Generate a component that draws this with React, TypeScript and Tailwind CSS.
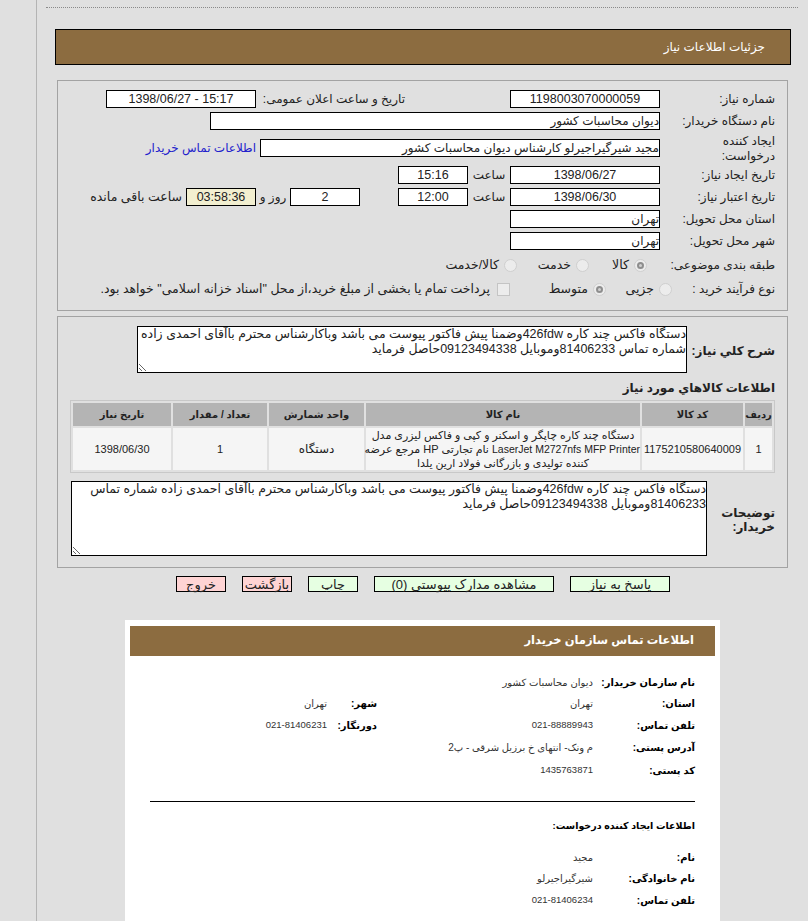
const FONT = "font-['Liberation_Sans','DejaVu_Sans',sans-serif]";

// فیلد عددی وسط چین است و فیلد متنی راست چین
function Field({ w, children, text, bg = "bg-white" }: { w: string; children?: React.ReactNode; text?: boolean; bg?: string }) {
  return (
    <div
      dir={text ? "rtl" : "ltr"}
      className={`${w} ${bg} ${text ? "text-right text-[12px]" : "text-center text-[12.5px]"} h-[18px] shrink-0 overflow-hidden whitespace-nowrap border border-black leading-[17px] text-[#222]`}
    >
      {children}
    </div>
  );
}

function Label({ w, children }: { w: string; children: React.ReactNode }) {
  return <div className={`${w} h-[18px] shrink-0 whitespace-nowrap text-[12px] leading-[19px] text-[#222]`}>{children}</div>;
}

function Radio({ checked }: { checked?: boolean }) {
  return (
    <span className="flex size-[13px] shrink-0 items-center justify-center rounded-full border border-[#cfcfcf] bg-[#ececec]">
      {checked && <span className="size-[7px] rounded-full border-2 border-[#8e8e8e] bg-[#d0d0d0]" />}
    </span>
  );
}

function RadioItem({ w, checked, text }: { w: string; checked?: boolean; text: string }) {
  return (
    <div className={`${w} flex shrink-0 items-center gap-[5px] text-[12.5px] text-[#222]`}>
      <Radio checked={checked} />
      <span>{text}</span>
    </div>
  );
}

function Btn({ w, pink, children }: { w: string; pink?: boolean; children: React.ReactNode }) {
  return (
    <div className={`${w} ${pink ? "bg-[#ffd4d4]" : "bg-[#e6ffe2]"} h-4 shrink-0 border border-black text-center text-[13px] leading-[15px] text-[#222]`}>
      {children}
    </div>
  );
}

function ContactValue({ children }: { children: string }) {
  const isNumber = /^[\d-]+$/.test(children);
  return <div className={`${isNumber ? "text-[9.5px]" : "text-[10px]"} whitespace-nowrap text-[#333]`}>{children}</div>;
}

function ContactRow({ label, value, label2, value2, top }: { label: string; value: string; label2?: string; value2?: string; top: string }) {
  return (
    <div className={`${top} flex h-[16px] items-center text-[10px]`}>
      <div className="w-[102px] shrink-0 whitespace-nowrap font-bold text-black">{label}</div>
      <div className="w-[216px] shrink-0">
        <ContactValue>{value}</ContactValue>
      </div>
      {label2 && <div className="w-[50px] shrink-0 font-bold text-black">{label2}</div>}
      {value2 && <ContactValue>{value2}</ContactValue>}
    </div>
  );
}

const DESC = "دستگاه فاکس چند کاره 426fdwوضمنا پیش فاکتور پیوست می باشد وباکارشناس محترم باآقای احمدی زاده شماره تماس 81406233وموبایل 09123494338حاصل فرماید";

export default function App() {
  return (
    <div className={`${FONT} flex h-[921px] w-[808px] overflow-hidden bg-[#e0e0e0]`}>
      {/* نوار کناری */}
      <div className="h-full w-[37px] shrink-0 border-r border-[#b4b4b4]" />

      <div className="w-[771px] shrink-0">
        <div className="ml-[9px] mt-[7px] w-[752px] border-t border-dotted border-[#8a8a8a]" />

        {/* هدر */}
        <div dir="rtl" className="ml-[18px] mt-[21px] flex h-[36px] w-[736px] items-center border border-black bg-[#8c6c40] pr-[25px] text-[12px] text-white">
          جزئیات اطلاعات نیاز
        </div>

        {/* پنل اطلاعات نیاز */}
        <div dir="rtl" className="ml-5 mt-[15px] h-[231px] w-[731px] border border-[#a3a3a3] pr-3 pt-[9px]">
          <div className="flex">
            <Label w="w-[115px]">شماره نیاز:</Label>
            <Field w="w-[150px]">1198003070000059</Field>
            <Label w="w-[254px] pr-[105px]">تاریخ و ساعت اعلان عمومی:</Label>
            <Field w="w-[150px]">1398/06/27 - 15:17</Field>
          </div>
          <div className="mt-1 flex">
            <Label w="w-[115px]">نام دستگاه خریدار:</Label>
            <Field w="w-[450px]" text>دیوان محاسبات کشور</Field>
          </div>
          <div className="mt-[9px] flex h-[18px]">
            <div className="-mt-[5px] w-[115px] shrink-0 text-[12px] leading-[15px] text-[#222]">
              ایجاد کننده
              <br />
              درخواست:
            </div>
            <Field w="w-[400px]" text>مجید شیرگیراجیرلو کارشناس دیوان محاسبات کشور</Field>
            <div className="mr-1 whitespace-nowrap text-[12px] leading-[18px] text-[#2222cc]">اطلاعات تماس خریدار</div>
          </div>
          <div className="mt-[9px] flex">
            <Label w="w-[115px]">تاریخ ایجاد نیاز:</Label>
            <Field w="w-[150px]">1398/06/27</Field>
            <Label w="w-[42px] text-center">ساعت</Label>
            <Field w="w-[70px]">15:16</Field>
          </div>
          <div className="mt-1 flex">
            <Label w="w-[115px]">تاریخ اعتبار نیاز:</Label>
            <Field w="w-[150px]">1398/06/30</Field>
            <Label w="w-[42px] text-center">ساعت</Label>
            <Field w="w-[70px]">12:00</Field>
            <div className="w-[38px] shrink-0" />
            <Field w="w-[70px]">2</Field>
            <Label w="w-[34px] text-center">روز و</Label>
            <Field w="w-[70px]" bg="bg-[#f2efd0]">03:58:36</Field>
            <Label w="w-[96px] pr-1 text-[12.5px]!">ساعت باقی مانده</Label>
          </div>
          <div className="mt-1 flex">
            <Label w="w-[115px]">استان محل تحویل:</Label>
            <Field w="w-[150px]" text>تهران</Field>
          </div>
          <div className="mt-1 flex">
            <Label w="w-[115px]">شهر محل تحویل:</Label>
            <Field w="w-[150px]" text>تهران</Field>
          </div>
          <div className="mt-[6px] flex h-[18px] items-center">
            <Label w="w-[128px]">طبقه بندی موضوعی:</Label>
            <RadioItem w="w-[58px]" checked text="کالا" />
            <RadioItem w="w-[72px]" text="خدمت" />
            <RadioItem w="w-[90px]" text="کالا/خدمت" />
          </div>
          <div className="mt-[6px] flex h-[18px] items-center">
            <Label w="w-[103px]">نوع فرآیند خرید :</Label>
            <RadioItem w="w-[66px]" text="جزیی" />
            <RadioItem w="w-[96px]" checked text="متوسط" />
            <div className="flex items-center gap-[7px] whitespace-nowrap text-[12.5px] text-[#222]">
              <span className="size-[13px] shrink-0 border border-[#c4c4c4] bg-[#ececec]" />
              <span>پرداخت تمام یا بخشی از مبلغ خرید،از محل "اسناد خزانه اسلامی" خواهد بود.</span>
            </div>
          </div>
        </div>

        {/* پنل شرح نیاز */}
        <div dir="rtl" className="ml-5 mt-[5px] h-[252px] w-[731px] border border-[#a3a3a3] pr-3 pt-[9px]">
          <div className="flex items-center">
            <div className="w-[88px] shrink-0 whitespace-nowrap pt-[3px] text-[12px] font-bold text-[#222]">شرح کلي نياز:</div>
            <textarea
              readOnly
              dir="rtl"
              value={DESC}
              className="h-[47px] w-[550px] border border-black bg-white px-0 py-0 text-[12.5px] leading-[15px] text-[#222] outline-none"
            />
          </div>
          <div className="mt-[6px] text-[12px] font-bold leading-[18px] text-[#222]">اطلاعات كالاهاي مورد نياز</div>

          <table className="mt-[3px] w-[703px] table-fixed border-separate border-spacing-[2px] border border-[#c8c8c8] text-center text-[11px] text-[#222]">
            <colgroup>
              <col className="w-[27px]" />
              <col className="w-[101px]" />
              <col className="w-[274px]" />
              <col className="w-[95px]" />
              <col className="w-[94px]" />
              <col className="w-[98px]" />
            </colgroup>
            <thead>
              <tr className="h-[23px] bg-[#b4b4b4] font-bold">
                <th className="p-0 text-[10px]">ردیف</th>
                <th className="p-0 text-[10px]">کد کالا</th>
                <th className="p-0 text-[10px]">نام کالا</th>
                <th className="p-0 text-[10px]">واحد شمارش</th>
                <th className="p-0 text-[10px]">تعداد / مقدار</th>
                <th className="p-0 text-[10px]">تاریخ نیاز</th>
              </tr>
            </thead>
            <tbody>
              <tr className="h-[42px] bg-[#f5f5f5]">
                <td className="p-0">1</td>
                <td className="p-0">1175210580640009</td>
                <td className="whitespace-nowrap p-0 leading-[14px]">
                  دستگاه چند کاره چاپگر و اسکنر و کپی و فاکس لیزری مدل
                  <br />
                  <span className="text-[10.5px]">LaserJet M2727nfs MFP Printer</span> نام تجارتی HP مرجع عرضه
                  <br />
                  کننده تولیدی و بازرگانی فولاد ارین یلدا
                </td>
                <td className="p-0 text-[12px]">دستگاه</td>
                <td className="p-0">1</td>
                <td className="p-0">1398/06/30</td>
              </tr>
            </tbody>
          </table>

          <div className="mt-2 flex items-center">
            <div className="w-[68px] shrink-0 pt-[3px] text-[12px] font-bold leading-[14px] text-[#222]">
              توضیحات
              <br />
              خریدار:
            </div>
            <textarea
              readOnly
              dir="rtl"
              value={DESC}
              className="h-[75px] w-[636px] border border-black bg-white px-0 py-0 text-[12.5px] leading-[15px] text-[#222] outline-none"
            />
          </div>
        </div>

        {/* دکمه ها */}
        <div dir="rtl" className="ml-[139px] mt-[8px] flex w-[494px] gap-4">
          <Btn w="w-[100px]">پاسخ به نیاز</Btn>
          <Btn w="w-[180px]">مشاهده مدارک پیوستي (0)</Btn>
          <Btn w="w-[50px]">چاپ</Btn>
          <Btn w="w-[50px]" pink>بازگشت</Btn>
          <Btn w="w-[50px]" pink>خروج</Btn>
        </div>

        {/* اطلاعات تماس */}
        <div dir="rtl" className="ml-[88px] mt-[28px] h-[320px] w-[595px] bg-white px-[5px] pt-[6px]">
          <div className="flex h-[30px] items-center bg-[#8c6c40] pr-[21px] text-[11.5px] font-bold text-white">
            اطلاعات تماس سازمان خریدار
          </div>
          <div className="pr-5">
            <ContactRow top="mt-[18px]" label="نام سازمان خریدار:" value="دیوان محاسبات کشور" />
            <ContactRow top="mt-[5px]" label="استان:" value="تهران" label2="شهر:" value2="تهران" />
            <ContactRow top="mt-[6px]" label="تلفن تماس:" value="021-88889943" label2="دورنگار:" value2="021-81406231" />
            <ContactRow top="mt-[6px]" label="آدرس پستی:" value="م ونک- انتهای خ برزیل شرقی - پ2" />
            <ContactRow top="mt-[7px]" label="کد پستی:" value="1435763871" />
            <div className="ml-5 mt-[23px] border-t border-black" />
            <div className="mt-[16px] text-[9.5px] font-bold leading-4 text-black">اطلاعات ایجاد کننده درخواست:</div>
            <ContactRow top="mt-[15px]" label="نام:" value="مجید" />
            <ContactRow top="mt-[5px]" label="نام خانوادگی:" value="شیرگیراجیرلو" />
            <ContactRow top="mt-[6px]" label="تلفن تماس:" value="021-81406234" />
          </div>
        </div>
      </div>
    </div>
  );
}
